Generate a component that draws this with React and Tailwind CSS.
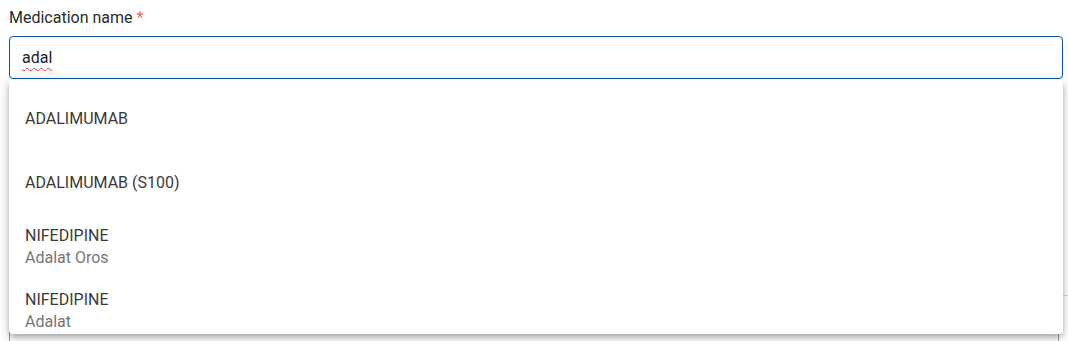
import { useState } from "react";

const options = [
  { name: "ADALIMUMAB" },
  { name: "ADALIMUMAB (S100)" },
  { name: "NIFEDIPINE", brand: "Adalat Oros" },
  { name: "NIFEDIPINE", brand: "Adalat" },
];

export default function App() {
  const [query, setQuery] = useState("adal");

  return (
    <div className="relative w-[1068px] h-[341px] overflow-hidden bg-white font-['Roboto','Liberation_Sans',sans-serif]">
      {/* row divider behind the list */}
      <div className="absolute left-[1060px] right-0 top-[295px] h-px bg-[#d8d8d8]" />

      {/* medication field */}
      <div className="pl-[9px] pr-[5px] pt-[7px]">
        <label className="block text-[16px] leading-[22px] text-[#2b2b2b]">
          Medication name <span className="text-[#f0605a]">*</span>
        </label>
        <div className="relative mt-[7px]">
          <div className="h-[43px] border-[1.5px] border-[#0b58a6] rounded-[4px] flex items-center pl-[12px]">
            <span className="text-[16px] text-[#222] underline decoration-wavy decoration-[#e53935] decoration-1 underline-offset-[4px]">
              {query}
            </span>
          </div>

          {/* suggestions */}
          <div className="absolute left-0 right-0 top-[44px] h-[254px] overflow-hidden bg-white rounded-b-[4px] rounded-t-[2px] shadow-[0_3px_5px_-1px_rgba(0,0,0,0.2),0_5px_8px_0_rgba(0,0,0,0.14),0_1px_14px_0_rgba(0,0,0,0.12)] z-10">
            <ul className="pt-[7px]">
              {options.map((o, i) => (
                <li
                  key={i}
                  onClick={() => setQuery(o.name)}
                  className="h-16 flex flex-col justify-center px-4 text-[16px] leading-[22px] cursor-pointer"
                >
                  <span className="text-[#3a3a3a]">{o.name}</span>
                  {o.brand && <span className="text-[#777]">{o.brand}</span>}
                </li>
              ))}
            </ul>
          </div>
        </div>

        {/* next field, mostly hidden under the list */}
        <div className="mt-[214px] mr-[5px] w-[1050px] h-[60px] border border-[#9a9a9a] rounded-[4px]" />
      </div>
    </div>
  );
}
